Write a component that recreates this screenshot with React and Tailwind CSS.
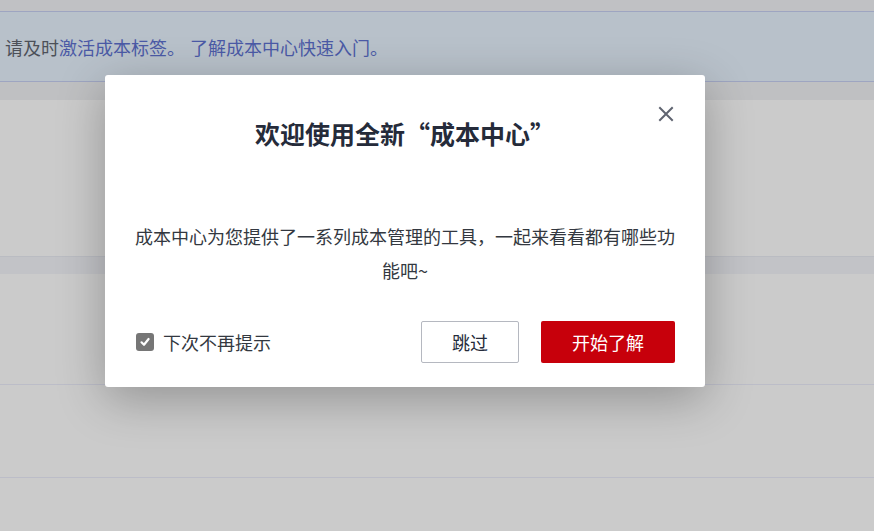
import React from "react";

export default function App() {
  const font = { fontFamily: '"Noto Sans CJK SC", "Noto Sans", sans-serif' };
  return (
    <div className="relative w-[874px] h-[531px] overflow-hidden bg-[#cbcbcb]" style={font}>
      <div className="h-[11px] bg-[#c0c1c4]" />
      <div className="h-[71px] bg-[#b8c1ca] border-y border-[#9ea5c1] flex items-center pl-[5px] pt-[1px] text-[18px]">
        <span className="text-[#4c5058]">请及时</span>
        <span className="text-[#4b5aa6]">激活成本标签。</span>
        <span className="text-[#4b5aa6] ml-[5px]">了解成本中心快速入门。</span>
      </div>
      <div className="h-[18px] bg-[#bfc0c2]" />
      <div className="h-[156px] bg-[#cbcbcb]" />
      <div className="h-[18px] bg-[#c2c3c7] border-t border-[#babcc2]" />
      <div className="h-[111px] bg-[#cbcbcb] border-b border-[#bcbdc8]" />
      <div className="h-[93px] bg-[#cbcbcb] border-b border-[#bcbdc8]" />

      <div className="absolute left-[105px] top-[75px] w-[600px] h-[312px] bg-white rounded-[3px] shadow-[0_12px_48px_rgba(0,0,0,0.28)] flex flex-col pt-[42px] px-[30px]">
        <button className="absolute right-[31px] top-[31px] w-[16px] h-[16px] text-[#5f6470]">
          <svg viewBox="0 0 16 16" width="16" height="16" fill="none" stroke="currentColor" strokeWidth="2" strokeLinecap="square">
            <path d="M2 2 L14 14 M14 2 L2 14" />
          </svg>
        </button>
        <h2 className="text-center text-[25px] leading-[32px] font-bold text-[#252b3a]">
          欢迎使用全新“成本中心”
        </h2>
        <p className="mt-[70px] text-center text-[18px] leading-[34px] text-[#333840]">
          成本中心为您提供了一系列成本管理的工具，一起来看看都有哪些功能吧~
        </p>
        <div className="mt-[34px] flex items-center justify-between">
          <label className="flex items-center gap-[9px] pl-[1px] text-[18px] text-[#333840]">
            <span className="w-[18px] h-[18px] rounded-[3px] bg-[#767676] flex items-center justify-center">
              <svg viewBox="0 0 12 12" width="12" height="12" fill="none" stroke="white" strokeWidth="2.2" strokeLinecap="round" strokeLinejoin="round">
                <path d="M2.5 6.3 L5 8.8 L9.6 3" />
              </svg>
            </span>
            下次不再提示
          </label>
          <div className="flex items-center gap-[22px]">
            <button className="w-[98px] h-[42px] border border-[#b5b8c0] rounded-[2px] bg-white text-[18px] text-[#252b3a]">
              跳过
            </button>
            <button className="w-[134px] h-[42px] rounded-[2px] bg-[#c7000b] text-[18px] text-white">
              开始了解
            </button>
          </div>
        </div>
      </div>
    </div>
  );
}
